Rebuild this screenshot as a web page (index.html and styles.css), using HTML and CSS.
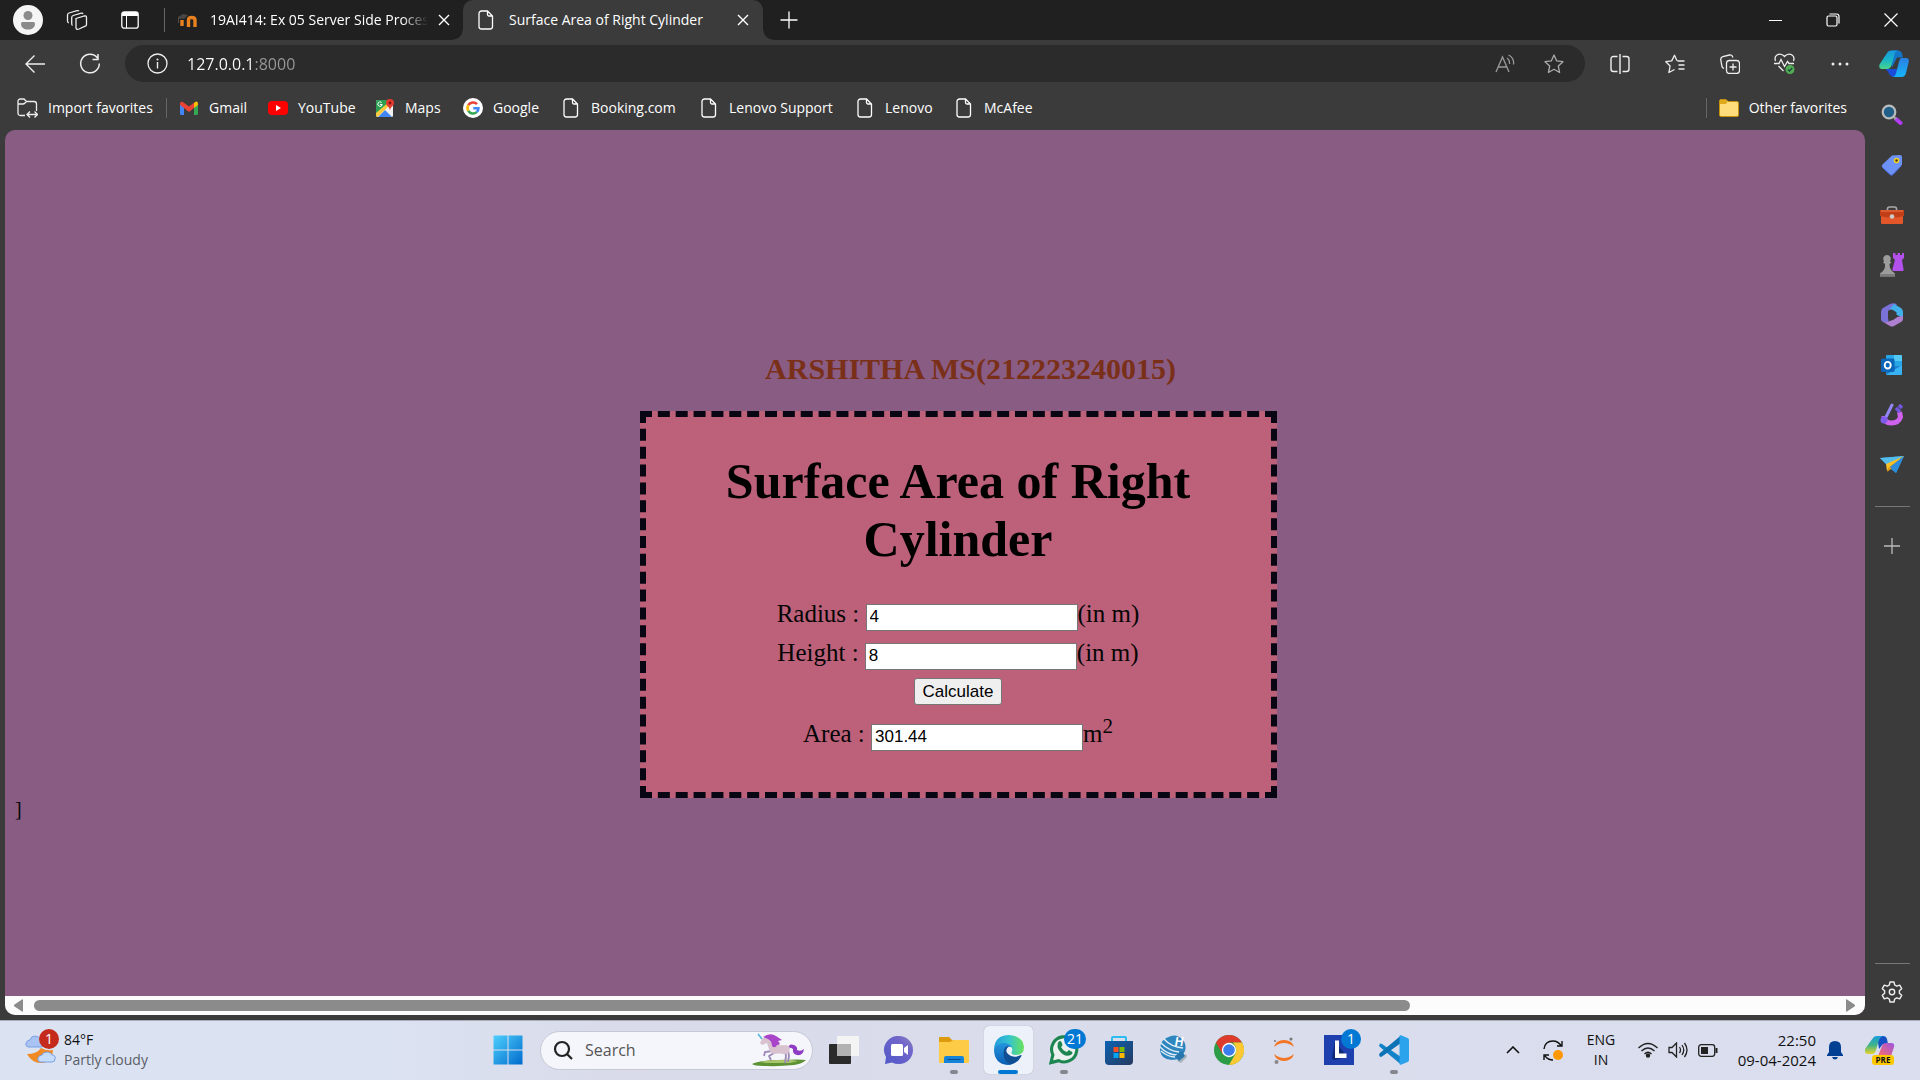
FILE: index.html
```html
<!DOCTYPE html>
<html lang="en">
<head>
<meta charset="utf-8">
<title>Surface Area of Right Cylinder</title>
<link rel="stylesheet" href="styles.css">
</head>
<body>
<svg class="defs" aria-hidden="true">
  <symbol id="file" viewBox="0 0 16 20"><path d="M3.500 1h6l5 5v10.500a2.500 2.500 0 0 1-2.500 2.500h-8.500a2.500 2.500 0 0 1-2.500-2.500v-13a2.500 2.500 0 0 1 2.500-2.500zM9.500 1v3.500a1.500 1.500 0 0 0 1.500 1.500h3.500" fill="none" stroke="#fff" stroke-width="1.300"/></symbol>
  <symbol id="cross" viewBox="0 0 12 12"><path d="M1 1l10 10M11 1L1 11" stroke="#fff" stroke-width="1.400"/></symbol>
  <linearGradient id="cpA" x1="0" y1="0" x2="0" y2="1"><stop offset="0" stop-color="#1997dc"/><stop offset=".5" stop-color="#18b4c8"/><stop offset="1" stop-color="#4ad58b"/></linearGradient>
  <linearGradient id="cpB" x1="0" y1="0" x2="0" y2="1"><stop offset="0" stop-color="#2a7fe0"/><stop offset="1" stop-color="#16b5fb"/></linearGradient>
</svg>

<div class="browser">
  <header class="tabstrip">
    <button class="cell profile" aria-label="Profile"><svg width="30" height="30" viewBox="0 0 30 30"><circle cx="15" cy="15" r="15" fill="#f5f5f5"/><circle cx="15" cy="10.500" r="4.500" fill="#8b8b8b"/><path d="M8 18.500q0-1.500 1.500-1.500h11q1.500 0 1.500 1.500c0 4-3 6-7 6s-7-2-7-6z" fill="#8b8b8b"/></svg></button>
    <button class="cell spaces" aria-label="Workspaces"><svg width="22" height="22" viewBox="0 0 22 22" fill="none" stroke="#eee" stroke-width="1.300"><path d="M10 9.500l8.500-2.500q2-.5 2 1.500v7q0 1.200-1.200 1.700l-6.300 2.800q-3 1-3-1.500zM6.500 16.500q-.8-.5-.8-2V8.500q0-1.500 1.500-2l8-2.300q1.500-.3 1.800.8M2.800 14q-1.300-.5-1.300-2V6q0-1.500 1.500-2l8-2.300q1.500-.3 2 .5"/></svg></button>
    <button class="cell vtabs" aria-label="Tab actions"><svg width="18" height="18" viewBox="0 0 18 18"><rect x=".8" y=".8" width="16.400" height="16.400" rx="2.500" fill="none" stroke="#fff" stroke-width="1.300"/><path d="M1 3a2 2 0 0 1 2-2h12a2 2 0 0 1 2 2v2H1z" fill="#fff"/><path d="M5.500 5v12" stroke="#fff"/></svg></button>
    <div class="tabs" role="tablist">
      <div class="tab idle" role="tab">
        <svg width="20" height="15" viewBox="0 0 20 15"><path d="M5 13V7M11.500 14V6.500q0-2 3.200-2t3.300 2.500V14" fill="none" stroke="#e9811f" stroke-width="3.400"/><path d="M1 4l5-3 5 1-4 4q-2-1-4 0z" fill="#4a4645"/><path d="M1.500 4v6" stroke="#504a48"/></svg>
        <span class="tab-name">19AI414: Ex 05 Server Side Processing</span>
        <button class="cross" aria-label="Close tab"><svg width="12" height="12"><use href="#cross"/></svg></button>
      </div>
      <div class="tab active" role="tab" aria-selected="true">
        <svg width="16" height="20"><use href="#file"/></svg>
        <span class="tab-name">Surface Area of Right Cylinder</span>
        <button class="cross" aria-label="Close tab"><svg width="12" height="12"><use href="#cross"/></svg></button>
      </div>
      <button class="newtab" aria-label="New tab"><svg width="18" height="18" viewBox="0 0 18 18"><path d="M9 0.500v17M.5 9h17" stroke="#fff" stroke-width="1.300"/></svg></button>
    </div>
    <div class="window-controls">
      <button aria-label="Minimize"><svg width="13" height="13" viewBox="0 0 13 13"><path d="M0 6.500h13" stroke="#fff"/></svg></button>
      <button aria-label="Restore"><svg width="14" height="14" viewBox="0 0 14 14" fill="none" stroke="#fff" stroke-width="1.200"><rect x="1" y="3" width="10" height="10" rx="1.500"/><path d="M3.500 1h7q2.500 0 2.500 2.500v7"/></svg></button>
      <button aria-label="Close"><svg width="14" height="14" viewBox="0 0 14 14"><path d="M.5.5l13 13M13.500.5l-13 13" stroke="#fff" stroke-width="1.200"/></svg></button>
    </div>
  </header>

  <div class="toolbar">
    <button class="nav" aria-label="Back"><svg width="22" height="20" viewBox="0 0 22 20" fill="none" stroke="#eee" stroke-width="1.400"><path d="M21 10H2M10.500 1.500L2 10l8.500 8.500"/></svg></button>
    <button class="nav" aria-label="Refresh"><svg width="22" height="22" viewBox="0 0 22 22" fill="none" stroke="#eee" stroke-width="1.500"><path d="M18.500 5a9.300 9.300 0 1 0 1.800 5.500M19 1v5.500h-5.500"/></svg></button>
    <form class="address">
      <svg width="21" height="21" viewBox="0 0 21 21"><circle cx="10.500" cy="10.500" r="9.500" fill="none" stroke="#eee" stroke-width="1.300"/><circle cx="10.500" cy="6.500" r="1" fill="#eee"/><path d="M10.500 9v6.500" stroke="#eee" stroke-width="1.400"/></svg>
      <input class="url" aria-label="Address" value="127.0.0.1:8000">
      <button type="button" aria-label="Read aloud"><svg width="20" height="20" viewBox="0 0 20 20" fill="none" stroke="#999" stroke-width="1.300"><path d="M1 18L7.500 3 14 18M3.300 13h8.400M12 4q3 2 2.500 6M13.500 1q6 3 5 9.500"/></svg></button>
      <button type="button" aria-label="Add to favorites"><svg width="20" height="20" viewBox="0 0 20 20" fill="none" stroke="#aaa" stroke-width="1.300" stroke-linejoin="round"><path d="M10 1l2.700 5.900 6.300.8-4.700 4.300 1.300 6.500L10 15.300 4.400 18.500l1.300-6.500L1 7.700l6.300-.8z"/></svg></button>
    </form>
    <div class="tools">
      <button aria-label="Split screen"><svg width="20" height="20" viewBox="0 0 20 20" fill="none" stroke="#eee" stroke-width="1.400"><path d="M7.500 2.500h-4q-2.500 0-2.500 2.500v10q0 2.500 2.500 2.500h4M12.500 2.500h4q2.500 0 2.500 2.500v10q0 2.500-2.500 2.500h-4M10 0v20"/></svg></button>
      <button aria-label="Favorites"><svg width="20" height="20" viewBox="0 0 20 20" fill="none" stroke="#eee" stroke-width="1.300" stroke-linejoin="round"><path d="M12.500 7H19.500M13.500 11h6M13.500 15h6M12 6.800L9.500 1.300 6.700 6.900.8 7.700l4.300 4.300-1.200 6.500 5.600-3"/></svg></button>
      <button aria-label="Collections"><svg width="20" height="20" viewBox="0 0 20 20" fill="none" stroke="#eee" stroke-width="1.300"><rect x="6.500" y="6.500" width="13" height="13" rx="3"/><path d="M13 9.500v7M9.500 13h7M4 14.500q-1.500-.6-2-2L.8 6Q.3 3.500 2.800 2.700L9.500 1q2.500-.5 3.500 2.500"/></svg></button>
      <button aria-label="Browser essentials"><svg width="21" height="21" viewBox="0 0 21 21" fill="none" stroke="#eee" stroke-width="1.300"><path d="M1.500 8Q0 4 3 2t6.500.5l1 1 1-1Q15 0 18 2t1.500 6M4.500 13l5 5M0 10.500h5l2-4 3.500 7 3-5 1.500 2h5"/><circle cx="16" cy="16.500" r="4.500" fill="#4fae52" stroke="none"/><path d="M14 16.500l1.500 1.500 2.700-3" stroke="#244"/></svg></button>
      <button aria-label="Settings and more"><svg width="18" height="4" viewBox="0 0 18 4" fill="#eee"><circle cx="2" cy="2" r="1.500"/><circle cx="9" cy="2" r="1.500"/><circle cx="16" cy="2" r="1.500"/></svg></button>
      <button class="assist" aria-label="Copilot"><svg width="30" height="28" viewBox="0 0 30 28"><path d="M9 3q1-2.500 4-2.500h6q3 0 4 3l1 4h-6l-5 10z" fill="#1376c8"/><path d="M7 19l4 6q1.500 2 4 2h5l2-8z" fill="#194cd8"/><path d="M8 3q1-2.500 4-2.500h7q-2.500.5-3.500 4l-3 10.500q-1 4-4.500 4H3q-3.500 0-2.500-4.500z" fill="url(#cpA)"/><path d="M22 8h5q3.500 0 2.700 4L27 23q-1 4-4.500 4H13q3 0 4-3.500l3-12q1-3.500 2-3.500z" fill="url(#cpB)"/></svg></button>
    </div>
  </div>

  <div class="columns">
    <div class="main-column">
      <nav class="favorites">
        <a href="#" class="import"><svg width="21" height="20" viewBox="0 0 21 20" fill="none" stroke="#eee" stroke-width="1.300"><path d="M8 17.500H3.500Q1 17.500 1 15V3.500Q1 1 3.500 1H7l2.500 2.500H17q2.500 0 2.500 2.500v7M1 6h5q1 0 2-1l1.500-1.500M10.500 16.500h9M13 13.500l-3 3 3 3M17.500 13.500l3 3-3 3"/></svg>Import favorites</a>
        <ul class="fav-list">
          <li><a href="#"><svg width="20" height="20" viewBox="0 0 20 20"><path d="M1 5v10.500q0 1.500 1.500 1.500H5V8z" fill="#4285f4"/><path d="M19 5v10.500q0 1.500-1.500 1.500H15V8z" fill="#34a853"/><path d="M15 5l1-1q1.500-1 2.500 0 .5.500.5 2v1l-4 3z" fill="#fbbc04"/><path d="M1 6q0-3 2.500-2.200L10 8.500l5-3.700V10l-5 4-5-4-4-3z" fill="#ea4335"/></svg>Gmail</a></li>
          <li><a href="#"><svg width="20" height="20" viewBox="0 0 20 20"><rect y="3" width="20" height="14" rx="4" fill="#f00"/><path d="M8 7l5 3-5 3z" fill="#fff"/></svg>YouTube</a></li>
          <li><a href="#"><svg width="20" height="20" viewBox="0 0 20 20"><rect x="1" y="2" width="17" height="17" rx="1.500" fill="#f1f1ef"/><path d="M1 3.500Q1 2 2.500 2H13v5L1 19z" fill="#2c9f52"/><path d="M3 19l7-7 7 7z" fill="#4285f4"/><path d="M1 15L14 4l1 3L2.500 19 1 18z" fill="#fbcb3e"/><path d="M6.500 4.500a2.200 2.200 0 1 0 .7 2H5" stroke="#fff" fill="none"/><path d="M15 1a4 4 0 0 1 4 4c0 3-3 3-4 7-1-4-4-4-4-7a4 4 0 0 1 4-4z" fill="#e33b2e"/><circle cx="15" cy="5" r="1.400" fill="#811"/></svg>Maps</a></li>
          <li><a href="#"><svg width="20" height="20" viewBox="0 0 20 20" fill="none" stroke-width="2.600"><circle cx="10" cy="10" r="10" fill="#fff"/><path d="M14 6.200A5.500 5.500 0 0 0 5.300 7.200" stroke="#ea4335"/><path d="M5.300 7.200a5.500 5.500 0 0 0 0 5.600" stroke="#fbbc05"/><path d="M5.300 12.800a5.500 5.500 0 0 0 8.400 1.300" stroke="#34a853"/><path d="M13.700 14.100q1.800-1.500 1.700-3.800H10.300" stroke="#4285f4"/></svg>Google</a></li>
          <li><a href="#"><svg width="20" height="20"><use href="#file"/></svg>Booking.com</a></li>
          <li><a href="#"><svg width="20" height="20"><use href="#file"/></svg>Lenovo Support</a></li>
          <li><a href="#"><svg width="20" height="20"><use href="#file"/></svg>Lenovo</a></li>
          <li><a href="#"><svg width="20" height="20"><use href="#file"/></svg>McAfee</a></li>
        </ul>
        <a href="#" class="other"><svg width="20" height="18" viewBox="0 0 20 18"><path d="M.5 2Q.5.500 2 .5h5L9 2.500h9q1.500 0 1.500 1.500v12q0 1.500-1.500 1.500H2Q.5 17.500.5 16z" fill="#ffdc7c" stroke="#c4920c"/><path d="M1 1h6l1.500 1.500L7 5H1z" fill="#e0aa1c"/></svg>Other favorites</a>
      </nav>

      <div class="viewport">
        <main class="page">
          <div class="stage">
            <h2 class="author">ARSHITHA MS(212223240015)</h2>
            <form class="card">
              <h1>Surface Area of Right Cylinder</h1>
              <div class="row"><label for="radius">Radius :&nbsp;</label><input id="radius" type="text" value="4">(in m)</div>
              <div class="row"><label for="height">Height :&nbsp;</label><input id="height" type="text" value="8">(in m)</div>
              <div class="row"><button type="button">Calculate</button></div>
              <div class="row area"><label for="area">Area :&nbsp;</label><input id="area" type="text" value="301.44">m<sup>2</sup></div>
            </form>
          </div>
          <div class="stray">]</div>
        </main>
        <div class="scrollbar">
          <svg width="9" height="13" viewBox="0 0 9 13"><path d="M9 1v11q0 1-1 .5L.5 7.500q-1-1 0-2L8 .5q1-.5 1 .5z" fill="#8b8b8b"/></svg>
          <div class="track"><div class="thumb"></div></div>
          <svg width="9" height="13" viewBox="0 0 9 13"><path d="M0 1v11q0 1 1 .5l7.500-5q1-1 0-2L1 .5Q0 0 0 1z" fill="#8b8b8b"/></svg>
        </div>
      </div>
    </div>

    <aside class="sidebar">
      <button aria-label="Search"><svg width="22" height="22" viewBox="0 0 22 22"><path d="M15 15l4.500 4" stroke="#b13df5" stroke-width="4" stroke-linecap="round"/><path d="M12 12l3 3" stroke="#999" stroke-width="2.500"/><circle cx="8" cy="8" r="6.300" fill="#206088" stroke="#b9bbbd" stroke-width="2.200"/></svg></button>
      <button aria-label="Shopping"><svg width="22" height="22" viewBox="0 0 22 22"><path d="M11 1.500l8-.5q2 0 2 2v7q0 1-1 2l-8 8.500q-1.500 1.500-3 0l-7.500-7q-1.500-1.500 0-3z" fill="#6d92f7"/><path d="M1.500 13.500l7.500 7q1.500 1.500 3 0l8-8.500" stroke="#4e6be0" fill="none"/><circle cx="15.500" cy="6.500" r="2.800" fill="#f4cf24"/><circle cx="15.500" cy="6.500" r="1.200" fill="#453a16"/></svg></button>
      <button aria-label="Tools"><svg width="24" height="20" viewBox="0 0 24 20"><path d="M7.500 6V4q0-2 2-2h5q2 0 2 2v2" fill="none" stroke="#aaa" stroke-width="1.600"/><rect x="1" y="5.500" width="22" height="13.500" rx="1.500" fill="#e2562a"/><path d="M0 5h24v6q-12 3-24 0z" fill="#c13f16"/><path d="M1 5h22v2H1z" fill="#dd5b30"/><circle cx="12" cy="11.500" r="2.300" fill="#ccc"/></svg></button>
      <button aria-label="Games"><svg width="24" height="24" viewBox="0 0 24 24"><path d="M13 0h2.500v2h2V0H20v2h2V0h2v5l-2 2 1.500 9q.5 2-1 2h-9q-1.500 0-1-2L15 7l-2-2z" fill="#b251ec"/><path d="M7 2a4 4 0 0 1 3 6.500l1.500 1-2 1.500q0 5 3 7.500l2.500 2v3H0v-3l2.500-2q3-3 2.500-7.500L3 9.500l1-1A4 4 0 0 1 7 2z" fill="#9c9c9c"/><path d="M0 21h15v2.500H0z" fill="#7c7c7c"/></svg></button>
      <button aria-label="Microsoft 365"><svg width="22" height="24" viewBox="0 0 22 24"><path d="M9 1L2 5Q0 6.500 0 9v7q0 2 2 3l6 1-1-5V8l9-6.500q-3-2-7-.5z" fill="#7a72d8"/><path d="M13 1l7 4q2 1.500 2 4v6l-7-3.500L9 6z" fill="#42b0ea"/><path d="M22 13v3q0 2-2 3l-7 4q-2 1-4 0l-7-4q4 1 7-1l7-4z" fill="#af7fd2"/><path d="M7.500 8.500L11 6.500l4.500 2.700v5.500L11 17.500l-3.500-2z" fill="#3b3b3b"/></svg></button>
      <button aria-label="Outlook"><svg width="22" height="22" viewBox="0 0 22 22"><rect x="5" y="1" width="16" height="11" rx="1" fill="#27a6e8"/><path d="M13 1h7q1 0 1 1v5h-8z" fill="#54c8f4"/><path d="M5 12h16v8q0 1-1 1H6q-1 0-1-1z" fill="#1e84d0"/><path d="M5 21L21 11v9q0 1-1 1z" fill="#38b2f0"/><rect y="4.500" width="13.500" height="13.500" rx="1.500" fill="#0b65b8"/><ellipse cx="6.700" cy="11.200" rx="3" ry="3.300" fill="none" stroke="#fff" stroke-width="1.900"/></svg></button>
      <button aria-label="Designer"><svg width="24" height="24" viewBox="0 0 24 24"><path d="M4 13q0 7 7.500 7 7 0 9-6l-1-5" fill="none" stroke="#cf63ee" stroke-width="5"/><path d="M12 2L5 16" stroke="#9386f5" stroke-width="3" stroke-linecap="round"/><circle cx="4" cy="17" r="3.500" fill="#7c5deb"/><path d="M16 5l4 4M19 2l3 3" stroke="#7456de" stroke-width="3.500"/></svg></button>
      <button aria-label="Drop"><svg width="24" height="18" viewBox="0 0 24 18"><path d="M0 2l24-2-8 17-5-4z" fill="#38a0ec"/><path d="M0 2l24-2L6 8z" fill="#55bde9"/><path d="M24 0L6 8l1 7 3-4z" fill="#f9c22a"/><path d="M24 0L9 11l-2 5 4-3z" fill="#e29b12"/><path d="M24 0L10 11l6 6z" fill="#2b8cdd"/></svg></button>
      <hr>
      <button class="add" aria-label="Customize"><svg width="16" height="16" viewBox="0 0 16 16"><path d="M8 0v16M0 8h16" stroke="#bbb" stroke-width="1.300"/></svg></button>
      <div class="spring"></div>
      <hr>
      <button class="gear" aria-label="Settings"><svg width="22" height="22" viewBox="0 0 22 22" fill="none" stroke="#eee" stroke-width="1.400" stroke-linejoin="round"><path d="M9 1h4l.7 3 2 1.200 3-1 2 3.500-2.300 2.100v2.400l2.300 2.100-2 3.500-3-1-2 1.200-.7 3H9l-.7-3-2-1.200-3 1-2-3.500 2.300-2.100V9.800L1.300 7.700l2-3.500 3 1 2-1.200z"/><circle cx="11" cy="11" r="2.700"/></svg></button>
    </aside>
  </div>
</div>

<footer class="taskbar">
  <div class="weather">
    <svg width="34" height="38" viewBox="0 0 34 38"><path d="M2 25q10 0 14-6 5 3 12 2-1 13-12 13-9 0-14-9z" fill="#f08a24"/><path d="M3 18q-3-1-2-4t4-3q1-4 5-4t6 4q4 0 4 4 0 3-4 3z" fill="#a9c4f3" stroke="#7ba0e4"/><path d="M15 33q-3-1-2-4t4-3q1-3 5-3t5 3q4 0 3 4 0 3-3 3z" fill="#c5dcfa" stroke="#7ba0e4"/><ellipse cx="24" cy="10" rx="10" ry="10" fill="#c42b1c"/><text x="24" y="15" text-anchor="middle" font-size="14" fill="#fff">1</text></svg>
    <p>84°F<br><span>Partly cloudy</span></p>
  </div>
  <div class="apps">
    <button class="start" aria-label="Start"><svg width="30" height="30" viewBox="0 0 30 30"><linearGradient id="win" gradientUnits="userSpaceOnUse" x1="0" y1="0" x2="30" y2="30"><stop stop-color="#4fd1fd"/><stop offset="1" stop-color="#0069cc"/></linearGradient><path d="M1 .5h13.500v14H.5V1zM15.500.5h14v14h-14zM.5 15.500h14v14h-14zM15.500 15.500h14v14h-14z" fill="url(#win)"/></svg></button>
    <label class="search"><svg width="20" height="20" viewBox="0 0 20 20" fill="none" stroke="#222" stroke-width="2.200"><circle cx="9" cy="9" r="7"/><path d="M14 14l5 5"/></svg><input type="search" placeholder="Search" aria-label="Search">
      <svg width="54" height="34" viewBox="0 0 54 34"><path d="M0 31q8-4 30-4 18-1 24 0-4 4-12 5-14 1.500-28 1-12 0-14-2z" fill="#5d9234"/><path d="M8 29q20-4 38-1l-8 2H14z" fill="#a9c56a"/><path d="M36 15q1-5 6-3 4 2 3 5 4 2 7-1-1 7-7 6-5-1-4-6-3-2-5-1z" fill="#8f3cc4"/><path d="M6 1l4 5" stroke="#4ab6d8" stroke-width="1.500"/><path d="M20 18l-7 1-1 4M22 20l-5 3 2 4M33 18l1 5-1 7M36 17l1 6-1 6" fill="none" stroke="#9b88b7" stroke-width="1.800"/><path d="M10 6q3-3 7-1 3 2 4 6 6 2 13 1 4 1 4 4l-2 5h-4q-5-1-10 0-4-1-5-5l-2-6-5 2-2-2z" fill="#d9c2cf"/><path d="M11 4Q18-1 24 3l6 4-4 1q4 4-1 4-2 4-5 1 0-5-4-7z" fill="#a945c9"/></svg></label>
    <button aria-label="Task view"><svg width="30" height="28" viewBox="0 0 30 28"><rect y="8" width="22" height="20" rx="1" fill="#2b2b2b"/><rect x="8" width="22" height="20" rx="1" fill="#f4f4f4"/><path d="M8 8h14v12H8z" fill="#b2b2b2"/></svg></button>
    <button aria-label="Chat"><svg width="30" height="28" viewBox="0 0 30 28"><linearGradient id="chat" x1="0" y1="1" x2="1" y2="0"><stop stop-color="#5058c9"/><stop offset=".7" stop-color="#7166ca"/><stop offset="1" stop-color="#8c83bd"/></linearGradient><path d="M15 0a14 14 0 0 1 0 28q-4 0-7-1.500L1 28l1-7A14 14 0 0 1 15 0z" fill="url(#chat)"/><rect x="7" y="8" width="12" height="12" rx="1.500" fill="#fff"/><path d="M20 12l4-3v10l-4-3z" fill="#fff"/></svg></button>
    <button class="running" aria-label="File Explorer"><svg width="30" height="28" viewBox="0 0 30 28"><path d="M0 1.500Q0 1 1 1h9l3 3h16v6H0z" fill="#dd9a0c"/><path d="M0 6h11l3-2h15q1 0 1 1v21q0 1-1 1H1q-1 0-1-1z" fill="#fdcb45"/><path d="M5 27v-5q0-2 2-2h16q2 0 2 2v5z" fill="#1583d8"/><path d="M8.500 23.500h13" stroke="#0b4c91"/></svg></button>
    <button class="running current" aria-label="Microsoft Edge"><svg width="30" height="30" viewBox="0 0 30 30"><linearGradient id="eA" x1="0" x2="1"><stop stop-color="#239bdc"/><stop offset=".5" stop-color="#35c4cf"/><stop offset="1" stop-color="#69e35a"/></linearGradient><linearGradient id="eB" x1="0" y1="0" x2="0" y2="1"><stop stop-color="#2396dc"/><stop offset="1" stop-color="#0c5db4"/></linearGradient><path d="M0 14Q1 0 15 0q14 1 15 12 0 8-8 8-6 0-4-4 1-2-1-4Q12 5 0 14z" fill="url(#eA)"/><path d="M0 14q3-6 10-6 5 0 8 4-6-1-6 4 0 10 10 10-3 4-8 4Q0 29 0 14z" fill="url(#eB)"/><path d="M10 15q1-4 5-4-5 4-1 8 5 5 13 1 1 0 .5 1Q23 29 16 29.500 8 25 10 15z" fill="#114f94"/></svg></button>
    <button class="running" aria-label="WhatsApp"><svg width="30" height="30" viewBox="0 5.500 31 31"><path d="M2 34l2-8A13 13 0 1 1 10 32z" fill="#eaf1ee" stroke="#1d8650" stroke-width="3.200"/><path d="M9 14q2-4 4-1l1 3-1.500 2q2 4 6 5l2-2 3.500 2q1 1-1 3-7 3-12-4-3-4-2-6z" fill="#1d8650"/></svg><b class="badge">21</b></button>
    <button aria-label="Microsoft Store"><svg width="30" height="30" viewBox="0 0 30 30"><linearGradient id="store" x1="0" y1="0" x2="1" y2="1"><stop stop-color="#0b62b2"/><stop offset="1" stop-color="#273a60"/></linearGradient><path d="M8 8V3q0-1 1-1h12q1 0 1 1v5" fill="none" stroke="#2bbdf0" stroke-width="2"/><path d="M1 6h28v20q0 4-4 4H5q-4 0-4-4z" fill="url(#store)"/><path d="M9.500 12h5v5h-5z" fill="#f25022"/><path d="M15.500 12h5v5h-5z" fill="#7fba00"/><path d="M9.500 18h5v5h-5z" fill="#00a4ef"/><path d="M15.500 18h5v5h-5z" fill="#ffb900"/></svg></button>
    <button aria-label="Network viewer"><svg width="30" height="30" viewBox="0 0 30 30"><path d="M12 1Q18-1 23 4q5 5 3 12l-5 8-8 1Q1 24 1 14q0-10 11-13z" fill="#2f86bf"/><path d="M2 8q8 8 18 9M1 12q8 8 17 8M2 16q7 6 14 6M5 4q7 8 19 9" fill="none" stroke="#e2eef7" stroke-width="1.300"/><path d="M18 26l9-7 1 3-6 6z" fill="#aab2b9"/><path d="M16 21l7-5 3 5-6 5z" fill="#2776ad"/><text x="20" y="11" text-anchor="middle" font-size="12" font-weight="700" font-style="italic" fill="#fff">H</text></svg></button>
    <button aria-label="Google Chrome"><svg width="30" height="30" viewBox="0 0 30 30"><circle cx="15" cy="15" r="15" fill="#2c9c47"/><path d="M15 0a15 15 0 0 1 13 7.500H15L8.500 19 2 7.500A15 15 0 0 1 15 0z" fill="#df3b2d"/><path d="M28 7.500A15 15 0 0 1 15 30l6.500-11.200Q24 13 19 7.500z" fill="#fcc934"/><circle cx="15" cy="15" r="7.200" fill="#fff"/><circle cx="15" cy="15" r="5.800" fill="#3b7ded"/></svg></button>
    <button aria-label="Jupyter"><svg width="22" height="28" viewBox="0 0 22 28"><path d="M1 11q2-7 10-7t10 7q-10-8-20 0zM1 18q2 7 10 7t10-7q-10 8-20 0z" fill="#f37626"/><circle cx="18" cy="3" r="1.500" fill="#777"/><circle cx="2" cy="5" r="1" fill="#777"/><circle cx="3.500" cy="26" r="2" fill="#888"/></svg></button>
    <button aria-label="Lenovo Vantage"><svg width="30" height="30" viewBox="0 0 30 30"><path d="M0 0h30v30H0z" fill="#1e3fae"/><path d="M11 6L8 23l2 2 13-3z" fill="#0d2a77"/><path d="M11 5.500h4v13h7.500V23H11z" fill="#fff"/></svg><b class="badge">1</b></button>
    <button class="running" aria-label="Visual Studio Code"><svg width="30" height="30" viewBox="0 0 30 30"><path d="M3 9Q1.500 8 .5 9.500t.5 2.500l21 17.500V22z" fill="#1283c8"/><path d="M22 .5L1 18q-1.500 1.500-.5 3t2.500.5L22 8z" fill="#0b72b5"/><path d="M22 .3L28.500 3q1.500.7 1.500 2v20q0 1.300-1.500 2L22 29.700q-1.500.3-1.500-1V1.300q0-1.300 1.500-1z" fill="#2aa2ec"/></svg></button>
  </div>
  <div class="tray">
    <svg class="chevron" width="14" height="8" viewBox="0 0 14 8"><path d="M1 7l6-6 6 6" fill="none" stroke="#111" stroke-width="1.600"/></svg>
    <svg class="sync" width="20" height="22" viewBox="0 0 20 22" fill="none" stroke="#111" stroke-width="1.400"><path d="M1 10Q2 2 10 2q5 0 8.500 5M19 2v5h-5M1 21v-5h5M2 17q3 4 8 4"/><circle cx="15" cy="16" r="5" fill="#ff9800" stroke="none"/></svg>
    <p class="lang">ENG<br>IN</p>
    <div class="status">
      <svg width="20" height="16" viewBox="0 0 20 16" fill="none" stroke="#222" stroke-width="1.400"><path d="M.5 6Q10-3 19.500 6M3.500 9Q10 3 16.500 9M6.500 12Q10 8.500 13.500 12"/><circle cx="10" cy="13.500" r="1.500" fill="#222"/></svg>
      <svg width="20" height="16" viewBox="0 0 20 16" fill="none" stroke="#222" stroke-width="1.300"><path d="M1 5.500h3L8.500 1v14L4 10.500H1zM11.500 5q2 3 0 6M14 3q3.500 5 0 10M16.500 1q5 7 0 14"/></svg>
      <svg width="20" height="13" viewBox="0 0 20 13"><rect x=".7" y=".7" width="16" height="11.600" rx="2.500" fill="none" stroke="#222" stroke-width="1.300"/><path d="M3 3h7v7H3zM17.500 4h2v5h-2z" fill="#222"/></svg>
    </div>
    <p class="clock">22:50<br>09-04-2024</p>
    <svg class="bell" width="16" height="20" viewBox="0 0 16 20"><path d="M8 1q6 0 6 6v5l2 3v1H0v-1l2-3V7q0-6 6-6zM5 17h6q-1 2.500-3 2.500T5 17z" fill="#003f91"/></svg>
    <svg class="copilot" width="30" height="29" viewBox="0 0 30 29"><linearGradient id="pA" x1="0" y1="0" x2="0" y2="1"><stop stop-color="#1a9cdc"/><stop offset=".5" stop-color="#3eb489"/><stop offset="1" stop-color="#e7d22a"/></linearGradient><linearGradient id="pB" x1="1" y1="0" x2="0" y2="1"><stop stop-color="#9c52e2"/><stop offset="1" stop-color="#fb6f6a"/></linearGradient><path d="M12 0h6q3 0 4 3l1 5h-5l-4 5z" fill="#1450c4"/><path d="M8 2q1-2 4-2h6q-3 1-4 4l-3 10q-1 4-4 4H3q-4 0-3-5z" fill="url(#pA)"/><path d="M21 7h5q4 0 3 4l-3 9H13l4-10q1-3 4-3z" fill="url(#pB)"/><rect x="7" y="19" width="22" height="10" rx="3" fill="#fec800"/><text x="18" y="27" text-anchor="middle" font-size="8" font-weight="700" fill="#111">PRE</text></svg>
  </div>
</footer>
</body>
</html>
```
FILE: styles.css
```css
* { box-sizing: border-box; }

body {
  margin: 0;
  min-height: 100vh;
  display: flex;
  flex-direction: column;
  background: #3b3b3b;
  color: #fff;
  font: 14px/20px "Open Sans", "Noto Sans", sans-serif;
}

.defs { position: absolute; width: 0; height: 0; }
svg { display: block; flex: none; }
p, h1, h2, ul { margin: 0; padding: 0; }
a { color: inherit; text-decoration: none; }

button {
  display: flex;
  align-items: center;
  justify-content: center;
  flex: none;
  padding: 0;
  border: 0;
  background: none;
}

.browser { flex: 1; display: flex; flex-direction: column; }

/* Tab strip */
.tabstrip { display: flex; height: 40px; padding-left: 2px; background: #202020; }
.cell { width: 52px; height: 40px; }
.spaces { width: 46px; }
.vtabs { width: 60px; }
.tabs { flex: 1; display: flex; }
.tab { display: flex; align-items: center; height: 40px; position: relative; }
.tab-name { flex: 1; overflow: hidden; white-space: nowrap; }
.cross { width: 20px; height: 20px; }

.idle { width: 303px; padding: 0 9px 0 17px; gap: 13px; }
.idle::before { content: ""; position: absolute; left: 4px; top: 8px; width: 1px; height: 24px; background: #666; }
.idle .tab-name { mask-image: linear-gradient(to right, #000 88%, transparent); }
.idle .cross { margin-left: -7px; }

.active { width: 300px; padding: 0 10px 0 15px; gap: 14px; background: #3b3b3b; border-radius: 10px 10px 0 0; }
.active > svg { margin-right: 1px; }
.active::before, .active::after { content: ""; position: absolute; bottom: 0; width: 10px; height: 10px; }
.active::before { left: -10px; background: radial-gradient(circle at 0 0, #202020 9px, #3b3b3b 10px); }
.active::after { right: -10px; background: radial-gradient(circle at 100% 0, #202020 9px, #3b3b3b 10px); }
.newtab { width: 52px; }

.window-controls { display: flex; }
.window-controls button { width: 58px; }

/* Toolbar */
.toolbar { display: flex; align-items: center; height: 47px; padding-left: 7px; }
.nav { width: 55px; height: 38px; }
.address {
  flex: 1;
  display: flex;
  align-items: center;
  height: 37px;
  margin-left: 8px;
  padding: 0 16px 0 22px;
  background: #2b2b2b;
  border-radius: 19px;
}
.address button { width: 50px; margin-right: -1px; }
.address button:last-child { width: 30px; margin: 0 0 0 10px; }
.url {
  flex: 1;
  margin: 0 0 0 19px;
  padding: 0;
  border: 0;
  outline: 0;
  font: 16px/24px "Open Sans", "Noto Sans", sans-serif;
  color: transparent;
  background: linear-gradient(to right, #fff 68px, #999 68px);
  background-clip: text;
}
.tools { display: flex; margin-left: 7px; }
.tools button { width: 55px; height: 38px; }
.tools .assist { width: 53px; }

/* Favorites bar */
.columns { flex: 1; display: flex; }
.main-column { flex: 1; display: flex; flex-direction: column; min-width: 0; }
.favorites { display: flex; height: 43px; align-items: center; padding: 0 18px 2px 17px; }
.favorites a { display: flex; align-items: center; gap: 10px; white-space: nowrap; }
.import { width: 150px; height: 20px; border-right: 1px solid #666; }
.fav-list {
  flex: 1;
  display: grid;
  grid-template-columns: 89px 107px 88px 98px 138px 156px 99px auto;
  justify-content: start;
  padding-left: 12px;
  list-style: none;
}
.other { height: 20px; padding-left: 12px; border-left: 1px solid #666; }

/* Web page */
.viewport {
  flex: 1;
  display: flex;
  flex-direction: column;
  margin: 0 0 5px 5px;
  overflow: hidden;
  border-radius: 10px;
  background: #895c84;
  color: #050505;
}
.page { flex: 1; padding: 222px 0 0 10px; font: 20px/23px "Liberation Serif", serif; }
.stage { padding-left: 36px; }
.author { padding-left: 25px; text-align: center; font-size: 30px; line-height: 34px; color: #7a3018; }
.card {
  width: 637px;
  margin: 25px auto 0;
  padding: 35px 20px 39px;
  border: 6px dashed #070612;
  background: #bc6179;
  font-size: 25px;
}
.card h1 { margin-bottom: 26px; text-align: center; font-size: 50px; line-height: 58px; color: #000; }
.row { display: flex; align-items: baseline; justify-content: center; height: 39px; line-height: 39px; }
.row input, .row button { height: 27px; border: 1px solid #767676; font: 17px "Liberation Sans", Arial, sans-serif; }
.row input { width: 212px; padding: 1px 3px; background: #fff; color: #000; }
.row button { width: 88px; margin-top: 6px; border-radius: 3px; background: #efefef; color: #000; }
.area { margin-top: 3px; }
.row sup { padding-top: 2px; font-size: 21px; line-height: 1; align-self: flex-start; }

.scrollbar { display: flex; align-items: center; height: 19px; padding: 0 10px 0 9px; gap: 11px; background: #fcfcfc; }
.track { flex: 1; }
.thumb { width: 76.4%; height: 11px; border-radius: 6px; background: #8b8b8b; }

/* Edge sidebar */
.sidebar { display: flex; flex-direction: column; align-items: center; width: 55px; padding: 3px 1px 3px 0; }
.sidebar button { width: 50px; height: 50px; }
.sidebar hr { width: 35px; height: 1px; margin: 16px 0 0; border: 0; background: #777; }
.sidebar .add { margin-top: 14px; }
.sidebar .gear { height: 53px; padding-top: 3px; }
.spring { flex: 1; }

/* Taskbar */
.taskbar {
  display: grid;
  grid-template-columns: 25% auto 1fr;
  height: 60px;
  padding-bottom: 1px;
  border-top: 1px solid #a9abb6;
  background: linear-gradient(to right, #dbe2f2 20%, #d9dbea 32%, #dadeee);
  color: #111;
}
.weather { display: flex; align-items: center; gap: 5px; padding-left: 25px; }
.weather svg { margin-bottom: 4px; }
.weather span { color: #5a5e66; }
.apps { display: flex; align-items: center; }
.apps button { position: relative; width: 55px; height: 48px; }
.apps .start { width: 56px; margin-right: 4px; }
.search {
  display: flex;
  align-items: center;
  width: 273px;
  height: 39px;
  padding: 0 6px 0 12px;
  border: 1px solid #c6c8d6;
  border-radius: 20px;
  background: #f5f6fb;
}
.search input { flex: 1; min-width: 0; margin-left: 10px; border: 0; outline: 0; background: none; font: 16px/20px "Open Sans", "Noto Sans", sans-serif; }
.search input::placeholder { color: #555; }
.search + button { margin-left: 3px; }
.running::after { content: ""; position: absolute; left: 24px; bottom: 0; width: 8px; height: 4px; border-radius: 2px; background: #85868e; }
.current::before { content: ""; position: absolute; inset: 0 3px; border-radius: 5px; background: #edf1f9; box-shadow: 0 0 1px #999; }
.current svg { position: relative; }
.current::after { left: 17px; width: 20px; background: #0078d4; }
.badge {
  position: absolute;
  top: 3px;
  right: 5px;
  min-width: 20px;
  height: 20px;
  padding: 0 3px;
  border-radius: 10px;
  background: #0078d4;
  color: #fff;
  font: 14px/20px "Open Sans", "Noto Sans", sans-serif;
}

.tray { display: flex; align-items: center; justify-content: flex-end; padding-right: 25px; }
.sync { margin-left: 23px; }
.lang { width: 30px; margin-left: 23px; text-align: center; }
.status { display: flex; align-items: center; gap: 10px; margin-left: 22px; }
.clock { width: 98px; text-align: right; font-size: 15px; }
.bell { margin-left: 11px; }
.copilot { margin-left: 22px; }
```
